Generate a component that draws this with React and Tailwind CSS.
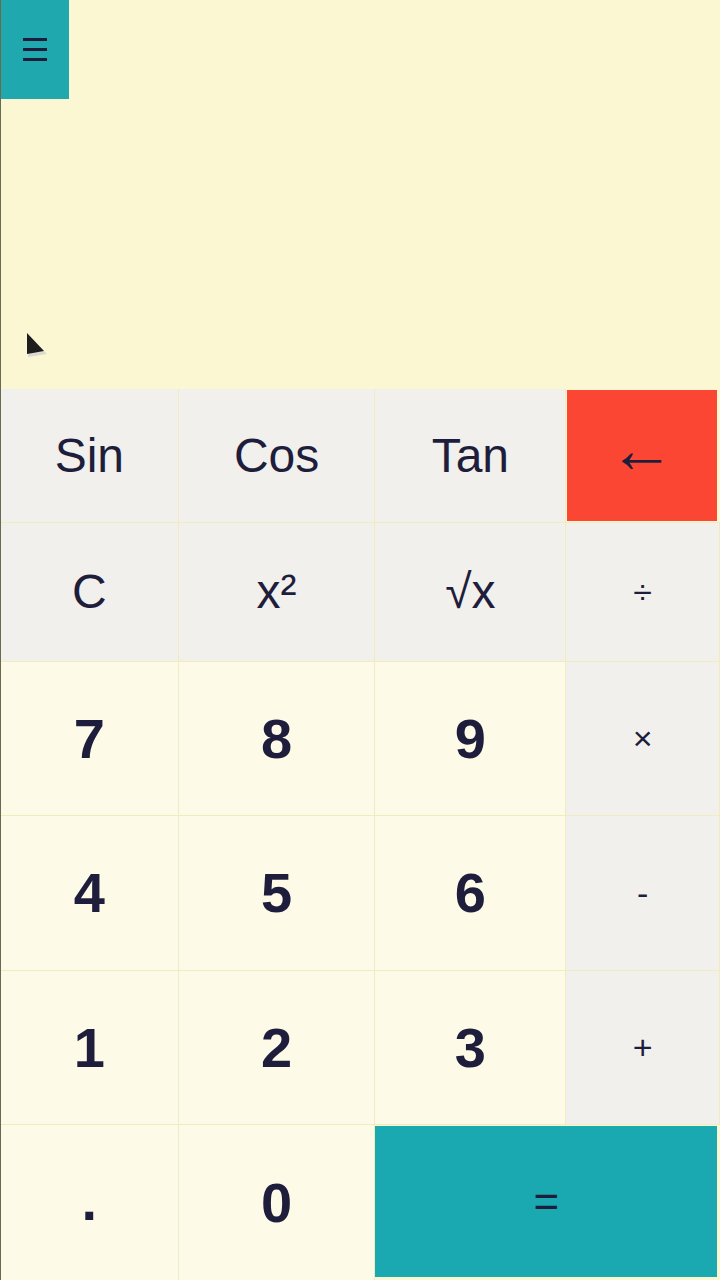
import React from 'react';

const font = { fontFamily: '"Liberation Sans", Arial, sans-serif' };

// ── Button rows ──────────────────────────────────────────────────
const rows = [
  { h: 'h-[134px]', cells: [
    { label: 'Sin', kind: 'fn' },
    { label: 'Cos', kind: 'fn' },
    { label: 'Tan', kind: 'fn' },
    { label: '←', kind: 'back' },
  ] },
  { h: 'h-[139px]', cells: [
    { label: 'C', kind: 'fn' },
    { label: 'x²', kind: 'fn' },
    { label: '√x', kind: 'fn' },
    { label: '÷', kind: 'op' },
  ] },
  { h: 'h-[154px]', cells: [
    { label: '7', kind: 'num' },
    { label: '8', kind: 'num' },
    { label: '9', kind: 'num' },
    { label: '×', kind: 'op' },
  ] },
  { h: 'h-[155px]', cells: [
    { label: '4', kind: 'num' },
    { label: '5', kind: 'num' },
    { label: '6', kind: 'num' },
    { label: '-', kind: 'op' },
  ] },
  { h: 'h-[154px]', cells: [
    { label: '1', kind: 'num' },
    { label: '2', kind: 'num' },
    { label: '3', kind: 'num' },
    { label: '+', kind: 'op' },
  ] },
];

const widths = ['w-[178px]', 'w-[197px]', 'w-[191px]', 'w-[154px]'];

function Cell({ label, kind, w }) {
  if (kind === 'back') {
    return (
      <div className={`${w} h-full p-px pr-[3px] border-b border-[#f1ecc0]`}>
        <button className="w-full h-full bg-[#fb4633] text-[#1e1e3c] text-[66px] leading-none flex items-center justify-center pb-[14px]">
          {label}
        </button>
      </div>
    );
  }
  const styles = {
    fn: 'bg-[#f1f0ec] text-[48px] font-normal',
    op: 'bg-[#f1f0ec] text-[34px] font-normal',
    num: 'bg-[#fdfbe8] text-[56px] font-bold',
  };
  return (
    <button
      className={`${w} h-full flex items-center justify-center border-r border-b border-[#f1ecc0] text-[#1e1e3c] ${styles[kind]}`}
    >
      {label}
    </button>
  );
}

export default function App() {
  return (
    <div className="w-[720px] h-[1280px] bg-[#fcf7d3] border-l border-[#6a6a50] flex flex-col overflow-hidden" style={font}>
      {/* ── Display ──────────────────────────────────────────── */}
      <div className="relative h-[389px] shrink-0">
        <button className="w-[69px] h-[99px] bg-[#1fa9ae] flex flex-col items-center justify-center gap-[7px] -ml-px">
          <span className="block w-[24px] h-[3px] bg-[#1e1e3c]" />
          <span className="block w-[24px] h-[3px] bg-[#1e1e3c]" />
          <span className="block w-[24px] h-[3px] bg-[#1e1e3c]" />
        </button>
        {/* mouse pointer */}
        <svg className="absolute left-[24px] top-[332px]" width="26" height="28" viewBox="0 0 26 28">
          <polygon points="3,3 3,25 22,22" fill="#dcdad0" />
          <polygon points="2,1 2,22 19,19" fill="#1e1e1e" />
        </svg>
      </div>

      {/* ── Keypad ───────────────────────────────────────────── */}
      {rows.map((row, i) => (
        <div key={i} className={`flex ${row.h} shrink-0`}>
          {row.cells.map((c, j) => (
            <Cell key={j} {...c} w={widths[j]} />
          ))}
        </div>
      ))}
      <div className="flex h-[155px] shrink-0">
        <button className="w-[178px] h-full flex items-center justify-center border-r border-[#f1ecc0] bg-[#fdfbe8] text-[#1e1e3c] text-[56px] font-bold pb-[4px]">
          .
        </button>
        <button className="w-[197px] h-full flex items-center justify-center border-r border-[#f1ecc0] bg-[#fdfbe8] text-[#1e1e3c] text-[56px] font-bold">
          0
        </button>
        <div className="w-[345px] h-full pt-px pb-[3px] pr-[3px]">
          <button className="w-full h-full bg-[#1aa9b0] text-[#1e1e3c] text-[44px] flex items-center justify-center">
            =
          </button>
        </div>
      </div>
    </div>
  );
}
